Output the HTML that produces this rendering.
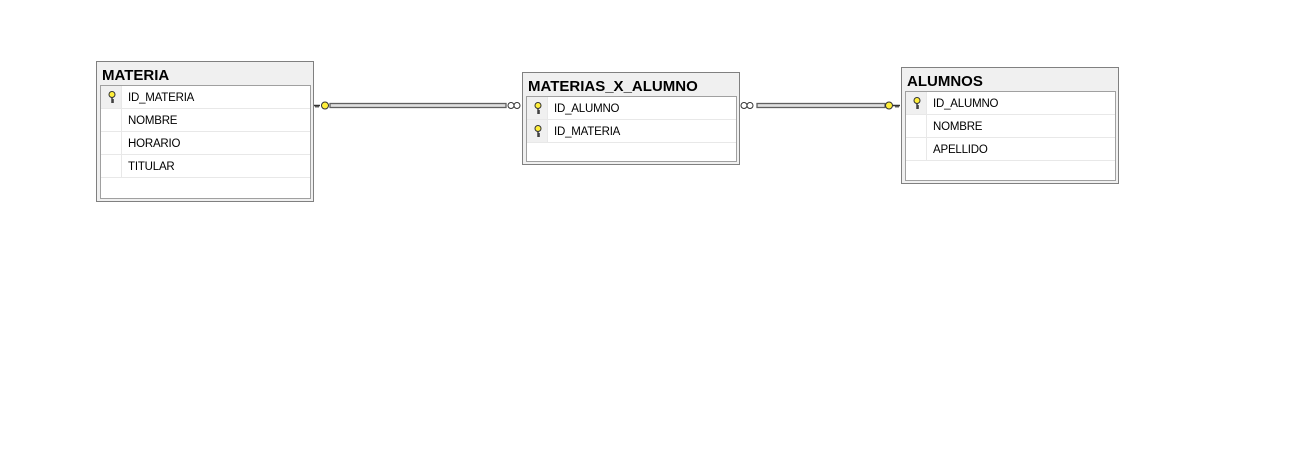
<!DOCTYPE html>
<html><head><style>
body{margin:0;width:1295px;height:457px;background:#fff;position:relative;font-family:"Segoe UI","Liberation Sans",sans-serif;overflow:hidden}
.t{position:absolute;border:1px solid #808080;background:#f0f0f0;box-sizing:border-box}
.t .h{position:absolute;left:5px;top:5px;font-weight:bold;font-size:15px;color:#000}
.t .g{position:absolute;left:3px;top:23px;right:2px;bottom:2px;border:1px solid #a0a0a0;background:#fff}
.r{height:22px;border-bottom:1px solid #e8e8e8;position:relative;font-size:11.5px;line-height:24px;letter-spacing:-0.2px}
.r .k{position:absolute;left:0;top:0;width:20px;height:22px;border-right:1px solid #e8e8e8}
.r span{position:absolute;left:27px;top:0}
.key{position:absolute;left:7px;top:5px}
</style></head><body>
<svg width="0" height="0" style="position:absolute"><defs>
<g id="ky"><circle cx="4" cy="3.5" r="3" fill="#ffef3a" stroke="#333" stroke-width="1"/><path d="M4 6.5V12M4 9h2M4 11h2" stroke="#333" stroke-width="1.4" fill="none"/></g>
</defs></svg>

<div class="t" style="left:96px;top:61px;width:218px;height:141px">
<div class="h">MATERIA</div>
<div class="g">
<div class="r"><div class="k" style="background:#f0f0f0"><svg class="key" width="9" height="13"><use href="#ky"/></svg></div><span>ID_MATERIA</span></div>
<div class="r"><div class="k"></div><span>NOMBRE</span></div>
<div class="r"><div class="k"></div><span>HORARIO</span></div>
<div class="r"><div class="k"></div><span>TITULAR</span></div>
</div></div>

<div class="t" style="left:522px;top:72px;width:218px;height:93px">
<div class="h">MATERIAS_X_ALUMNO</div>
<div class="g">
<div class="r"><div class="k" style="background:#f0f0f0"><svg class="key" width="9" height="13"><use href="#ky"/></svg></div><span>ID_ALUMNO</span></div>
<div class="r"><div class="k" style="background:#f0f0f0"><svg class="key" width="9" height="13"><use href="#ky"/></svg></div><span>ID_MATERIA</span></div>
</div></div>

<div class="t" style="left:901px;top:67px;width:218px;height:117px">
<div class="h">ALUMNOS</div>
<div class="g">
<div class="r"><div class="k" style="background:#f0f0f0"><svg class="key" width="9" height="13"><use href="#ky"/></svg></div><span>ID_ALUMNO</span></div>
<div class="r"><div class="k"></div><span>NOMBRE</span></div>
<div class="r"><div class="k"></div><span>APELLIDO</span></div>
</div></div>

<svg style="position:absolute;left:0;top:0" width="1295" height="457">
<g stroke="#606060" stroke-width="1.3" fill="none">
<rect x="330" y="103.5" width="176" height="4" fill="#e0e0e0"/>
<rect x="757" y="103.5" width="128" height="4" fill="#e0e0e0"/>
</g>
<path d="M314 105.5h6M316 105.5v2M318 105.5v2" stroke="#333" stroke-width="1.5"/>
<circle cx="325" cy="105.5" r="3.5" fill="#ffef3a" stroke="#333"/>
<circle cx="511" cy="105.5" r="3" fill="#fff" stroke="#333"/>
<circle cx="517" cy="105.5" r="3" fill="#fff" stroke="#333"/>
<circle cx="744" cy="105.5" r="3" fill="#fff" stroke="#333"/>
<circle cx="750" cy="105.5" r="3" fill="#fff" stroke="#333"/>
<circle cx="889" cy="105.5" r="3.5" fill="#ffef3a" stroke="#333"/>
<path d="M893 105.5h7M896 105.5v2M898 105.5v2" stroke="#333" stroke-width="1.5"/>
</svg>
</body></html>
